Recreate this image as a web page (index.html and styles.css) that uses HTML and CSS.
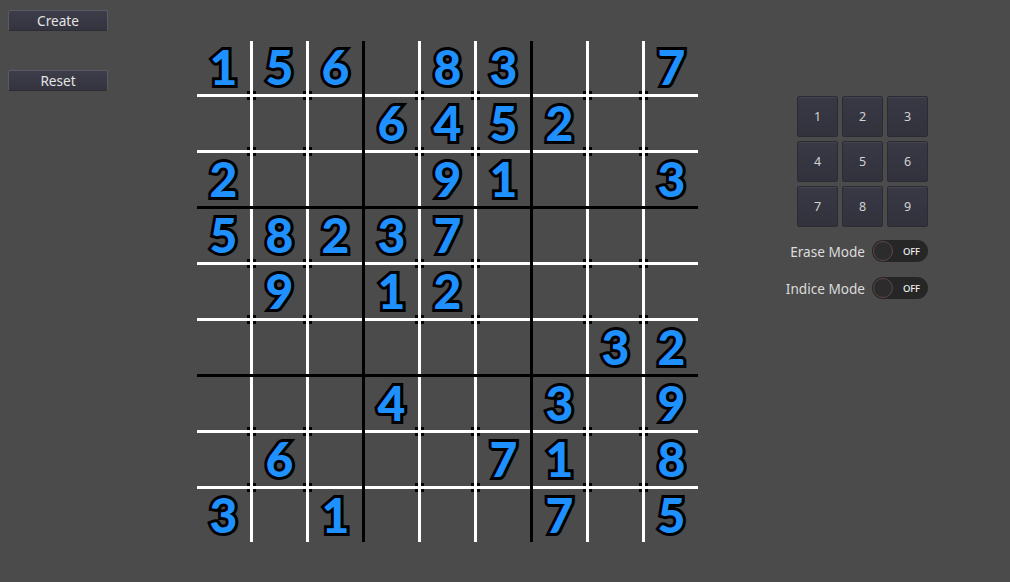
FILE: index.html
```html
<!DOCTYPE html>
<html>
<head>
<meta charset="utf-8">
<link rel="stylesheet" href="styles.css">
</head>
<body>
<div class="app">
  <div class="left">
    <button class="btn">Create</button>
    <button class="btn">Reset</button>
  </div>
  <div class="board">
    <div class="c d">1</div><div class="c d">5</div><div class="c">6</div><div class="c d"></div><div class="c d">8</div><div class="c">3</div><div class="c d"></div><div class="c d"></div><div class="c">7</div>
    <div class="c d"></div><div class="c d"></div><div class="c"></div><div class="c d">6</div><div class="c d">4</div><div class="c">5</div><div class="c d">2</div><div class="c d"></div><div class="c"></div>
    <div class="c">2</div><div class="c"></div><div class="c"></div><div class="c"></div><div class="c">9</div><div class="c">1</div><div class="c"></div><div class="c"></div><div class="c">3</div>
    <div class="c d">5</div><div class="c d">8</div><div class="c">2</div><div class="c d">3</div><div class="c d">7</div><div class="c"></div><div class="c d"></div><div class="c d"></div><div class="c"></div>
    <div class="c d"></div><div class="c d">9</div><div class="c"></div><div class="c d">1</div><div class="c d">2</div><div class="c"></div><div class="c d"></div><div class="c d"></div><div class="c"></div>
    <div class="c"></div><div class="c"></div><div class="c"></div><div class="c"></div><div class="c"></div><div class="c"></div><div class="c"></div><div class="c">3</div><div class="c">2</div>
    <div class="c d"></div><div class="c d"></div><div class="c"></div><div class="c d">4</div><div class="c d"></div><div class="c"></div><div class="c d">3</div><div class="c d"></div><div class="c">9</div>
    <div class="c d"></div><div class="c d">6</div><div class="c"></div><div class="c d"></div><div class="c d"></div><div class="c">7</div><div class="c d">1</div><div class="c d"></div><div class="c">8</div>
    <div class="c">3</div><div class="c"></div><div class="c">1</div><div class="c"></div><div class="c"></div><div class="c"></div><div class="c">7</div><div class="c"></div><div class="c">5</div>
    <div class="bl v1"></div><div class="bl v2"></div><div class="bl h1"></div><div class="bl h2"></div>
  </div>
  <div class="side">
    <div class="pad">
      <button class="key">1</button><button class="key">2</button><button class="key">3</button>
      <button class="key">4</button><button class="key">5</button><button class="key">6</button>
      <button class="key">7</button><button class="key">8</button><button class="key">9</button>
    </div>
    <div class="toggles">
      <div class="row"><span class="lbl">Erase Mode</span><span class="sw"><span class="knob"></span><span class="off">OFF</span></span></div>
      <div class="row"><span class="lbl">Indice Mode</span><span class="sw"><span class="knob"></span><span class="off">OFF</span></span></div>
    </div>
  </div>
</div>
</body>
</html>
```
FILE: styles.css
```css
html, body {
  margin: 0;
  padding: 0;
  background: #4b4b4b;
  width: 1010px;
  height: 582px;
  overflow: hidden;
  font-family: "Noto Sans", "DejaVu Sans", sans-serif;
}
.app {
  display: flex;
  align-items: flex-start;
}
.left {
  display: flex;
  flex-direction: column;
  gap: 39px;
  padding: 10px 0 0 8px;
  width: 100px;
}
.btn {
  width: 100px;
  height: 21px;
  padding: 0;
  background: linear-gradient(#3d3d4a, #34343f);
  border: 1px solid #5a5a66;
  border-bottom-color: #2c2c34;
  border-radius: 2px;
  color: #e4e4e4;
  font-family: "Noto Sans", sans-serif;
  font-size: 13.6px;
  line-height: 19px;
}
.board {
  position: relative;
  margin: 41px 0 0 89px;
  display: grid;
  grid-template-columns: repeat(9, 53px);
  grid-template-rows: repeat(9, 53px);
  gap: 3px;
  background: #ffffff;
}
.c {
  position: relative;
  background: #4b4b4b;
  display: flex;
  align-items: center;
  justify-content: center;
  font-family: Lato, "Open Sans", sans-serif;
  font-weight: 900;
  font-size: 48px;
  line-height: 1;
  color: #1e90ff;
  -webkit-text-stroke: 6px #000;
  paint-order: stroke fill;
  padding-bottom: 1px;
  box-sizing: border-box;
}
.c.d::after {
  content: "";
  position: absolute;
  right: -6px;
  bottom: -6px;
  width: 9px;
  height: 9px;
  z-index: 1;
  background:
    linear-gradient(#fff, #fff) center / 3px 9px no-repeat,
    linear-gradient(#fff, #fff) center / 9px 3px no-repeat,
    #000;
}
.bl {
  position: absolute;
  background: #000;
  z-index: 2;
}
.v1, .v2 { top: 0; bottom: 0; width: 3px; }
.h1, .h2 { left: 0; right: 0; height: 3px; }
.v1 { left: 165px; }
.v2 { left: 333px; }
.h1 { top: 165px; }
.h2 { top: 333px; }
.side {
  margin: 96px 0 0 82px;
  width: 148px;
  display: flex;
  flex-direction: column;
  align-items: flex-end;
}
.pad {
  display: grid;
  grid-template-columns: repeat(3, 41px);
  grid-template-rows: repeat(3, 41px);
  gap: 4px;
}
.key {
  padding: 0;
  background: linear-gradient(#393946, #32323d);
  border: 1px solid #2b2b33;
  box-shadow: inset 0 1px 0 #45454f;
  border-radius: 2px;
  color: #d2d2d2;
  font-family: "Noto Sans", sans-serif;
  font-size: 12.5px;
}
.toggles {
  margin-top: 13px;
  display: flex;
  flex-direction: column;
  gap: 15px;
  align-items: flex-end;
}
.row {
  display: flex;
  align-items: center;
  gap: 7px;
}
.lbl {
  color: #dcdcdc;
  font-size: 13.6px;
}
.sw {
  width: 56px;
  height: 22px;
  border-radius: 11px;
  background: #262626;
  display: flex;
  align-items: center;
  box-sizing: border-box;
  padding: 0 5px 0 1px;
  gap: 10px;
}
.knob {
  width: 20px;
  height: 20px;
  border-radius: 50%;
  background: #2c2c2c;
  border: 1px solid #5c4646;
  box-sizing: border-box;
}
.off {
  color: #f0f0f0;
  font-size: 9.5px;
  font-weight: 500;
  letter-spacing: -0.2px;
}
```
